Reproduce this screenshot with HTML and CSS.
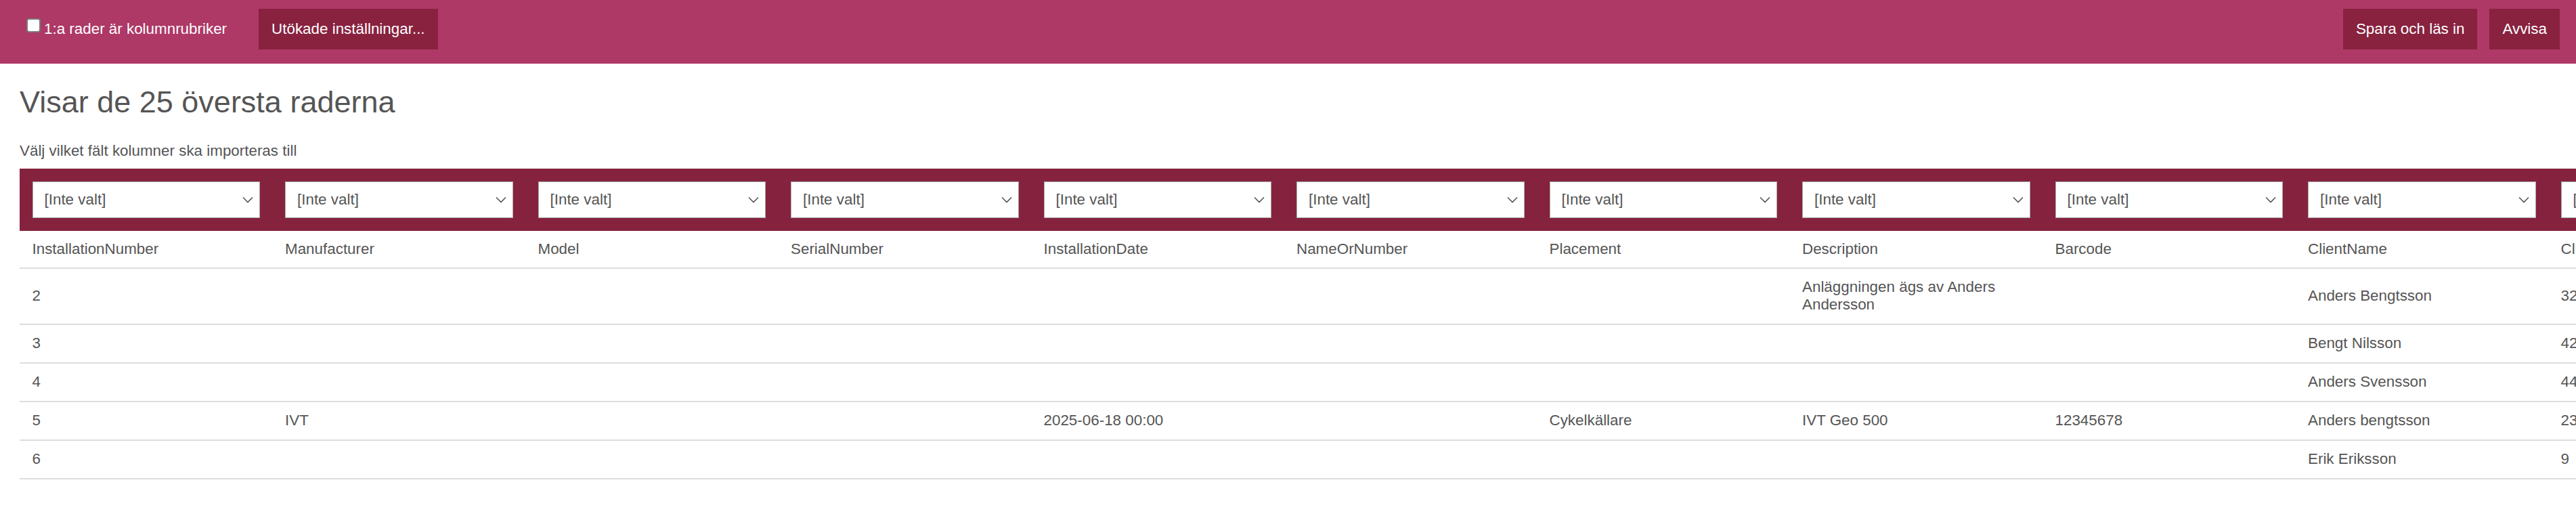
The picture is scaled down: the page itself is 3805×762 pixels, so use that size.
FILE: index.html
```html
<!DOCTYPE html>
<html lang="sv">
<head>
  <meta charset="UTF-8">
  <meta name="viewport" content="width=device-width, initial-scale=1.0">
  <link rel="stylesheet" href="styles.css">
  <title>Importera anläggningar</title>
</head>
<body>
  <div class="topbar">
    <label class="check-label"><input type="checkbox" class="check">1:a rader är kolumnrubriker</label>
    <button class="btn btn-settings">Utökade inställningar...</button>
    <div class="actions">
      <button class="btn">Spara och läs in</button>
      <button class="btn">Avvisa</button>
    </div>
  </div>

  <div class="content">
    <h1 class="title">Visar de 25 översta raderna</h1>
    <p class="hint">Välj vilket fält kolumner ska importeras till</p>

    <div class="table-wrap">
      <table class="grid">
        <thead>
          <tr class="pick-row">
            <th><select><option>[Inte valt]</option><option>Anläggningsnummer</option></select></th>
            <th><select><option>[Inte valt]</option><option>Tillverkare</option></select></th>
            <th><select><option>[Inte valt]</option><option>Modell</option></select></th>
            <th><select><option>[Inte valt]</option><option>Serienummer</option></select></th>
            <th><select><option>[Inte valt]</option><option>Installationsdatum</option></select></th>
            <th><select><option>[Inte valt]</option><option>Namn</option></select></th>
            <th><select><option>[Inte valt]</option><option>Placering</option></select></th>
            <th><select><option>[Inte valt]</option><option>Beskrivning</option></select></th>
            <th><select><option>[Inte valt]</option><option>Streckkod</option></select></th>
            <th><select><option>[Inte valt]</option><option>Kundnamn</option></select></th>
            <th><select><option>[Inte valt]</option><option>Kundnummer</option></select></th>
          </tr>
          <tr class="name-row">
            <th>InstallationNumber</th>
            <th>Manufacturer</th>
            <th>Model</th>
            <th>SerialNumber</th>
            <th>InstallationDate</th>
            <th>NameOrNumber</th>
            <th>Placement</th>
            <th>Description</th>
            <th>Barcode</th>
            <th>ClientName</th>
            <th>ClientNumber</th>
          </tr>
        </thead>
        <tbody>
          <tr>
            <td>2</td><td></td><td></td><td></td><td></td><td></td><td></td>
            <td>Anläggningen ägs av Anders Andersson</td><td></td>
            <td>Anders Bengtsson</td><td>32</td>
          </tr>
          <tr>
            <td>3</td><td></td><td></td><td></td><td></td><td></td><td></td><td></td><td></td>
            <td>Bengt Nilsson</td><td>42</td>
          </tr>
          <tr>
            <td>4</td><td></td><td></td><td></td><td></td><td></td><td></td><td></td><td></td>
            <td>Anders Svensson</td><td>44</td>
          </tr>
          <tr>
            <td>5</td><td>IVT</td><td></td><td></td><td>2025-06-18 00:00</td><td></td>
            <td>Cykelkällare</td><td>IVT Geo 500</td><td>12345678</td>
            <td>Anders bengtsson</td><td>23</td>
          </tr>
          <tr>
            <td>6</td><td></td><td></td><td></td><td></td><td></td><td></td><td></td><td></td>
            <td>Erik Eriksson</td><td>9</td>
          </tr>
        </tbody>
      </table>
    </div>
  </div>
</body>
</html>
```

FILE: styles.css
```css
* {
  box-sizing: border-box;
}

body {
  margin: 0;
  overflow: hidden;
  font-family: "Liberation Sans", Arial, sans-serif;
  font-size: 22.4px;
  line-height: 26px;
  color: #555;
  background: #fff;
}

/* top bar */
.topbar {
  display: flex;
  align-items: flex-start;
  height: 94px;
  padding: 13px 24px 0 39px;
  background-color: #ae3866;
  color: #fff;
}

.check-label {
  display: flex;
  align-items: center;
  height: 60px;
}

.check {
  appearance: none;
  width: 21px;
  height: 21px;
  margin: 0 5px 11px 0;
  border: 2px solid #7a7a7a;
  border-radius: 4px;
  background: #fff;
}

.btn {
  height: 60px;
  padding: 0 19px;
  border: none;
  background-color: #88223f;
  color: #fff;
  font-family: inherit;
  font-size: 22.4px;
  cursor: pointer;
}

.btn-settings {
  margin-left: 47px;
}

.actions {
  display: flex;
  gap: 18px;
  margin-left: auto;
}

/* content */
.content {
  padding-left: 29px;
}

.title {
  margin: 32px 0 0;
  font-size: 45px;
  font-weight: normal;
  line-height: 1.1;
  color: #555;
}

.hint {
  margin: 34px 0 0;
}

.table-wrap {
  margin-top: 13px;
  overflow: hidden;
}

.grid {
  width: 4108.5px;
  table-layout: fixed;
  border-collapse: collapse;
}

.grid th,
.grid td {
  width: 373.5px;
  padding: 14.5px 18.5px;
  text-align: left;
  font-weight: normal;
  vertical-align: middle;
}

.pick-row {
  background-color: #85233f;
}

.pick-row th {
  padding: 19px 18.5px;
}

.pick-row select {
  display: block;
  width: 100%;
  height: 54px;
  padding: 0 30px 0 17px;
  border: 1.5px solid #ababab;
  border-radius: 0;
  appearance: none;
  background: #fff url("data:image/svg+xml,%3Csvg xmlns='http://www.w3.org/2000/svg' width='16' height='10' viewBox='0 0 16 10'%3E%3Cpath d='M1 1.5 8 8.5 15 1.5' fill='none' stroke='%23555' stroke-width='1.6'/%3E%3C/svg%3E") no-repeat right 9px center;
  color: #555;
  font-family: inherit;
  font-size: 22.4px;
}

.name-row th {
  padding: 14px 18.5px;
  border-bottom: 2px solid #dddddd;
}

.grid td {
  border-bottom: 2px solid #dddddd;
}
```
